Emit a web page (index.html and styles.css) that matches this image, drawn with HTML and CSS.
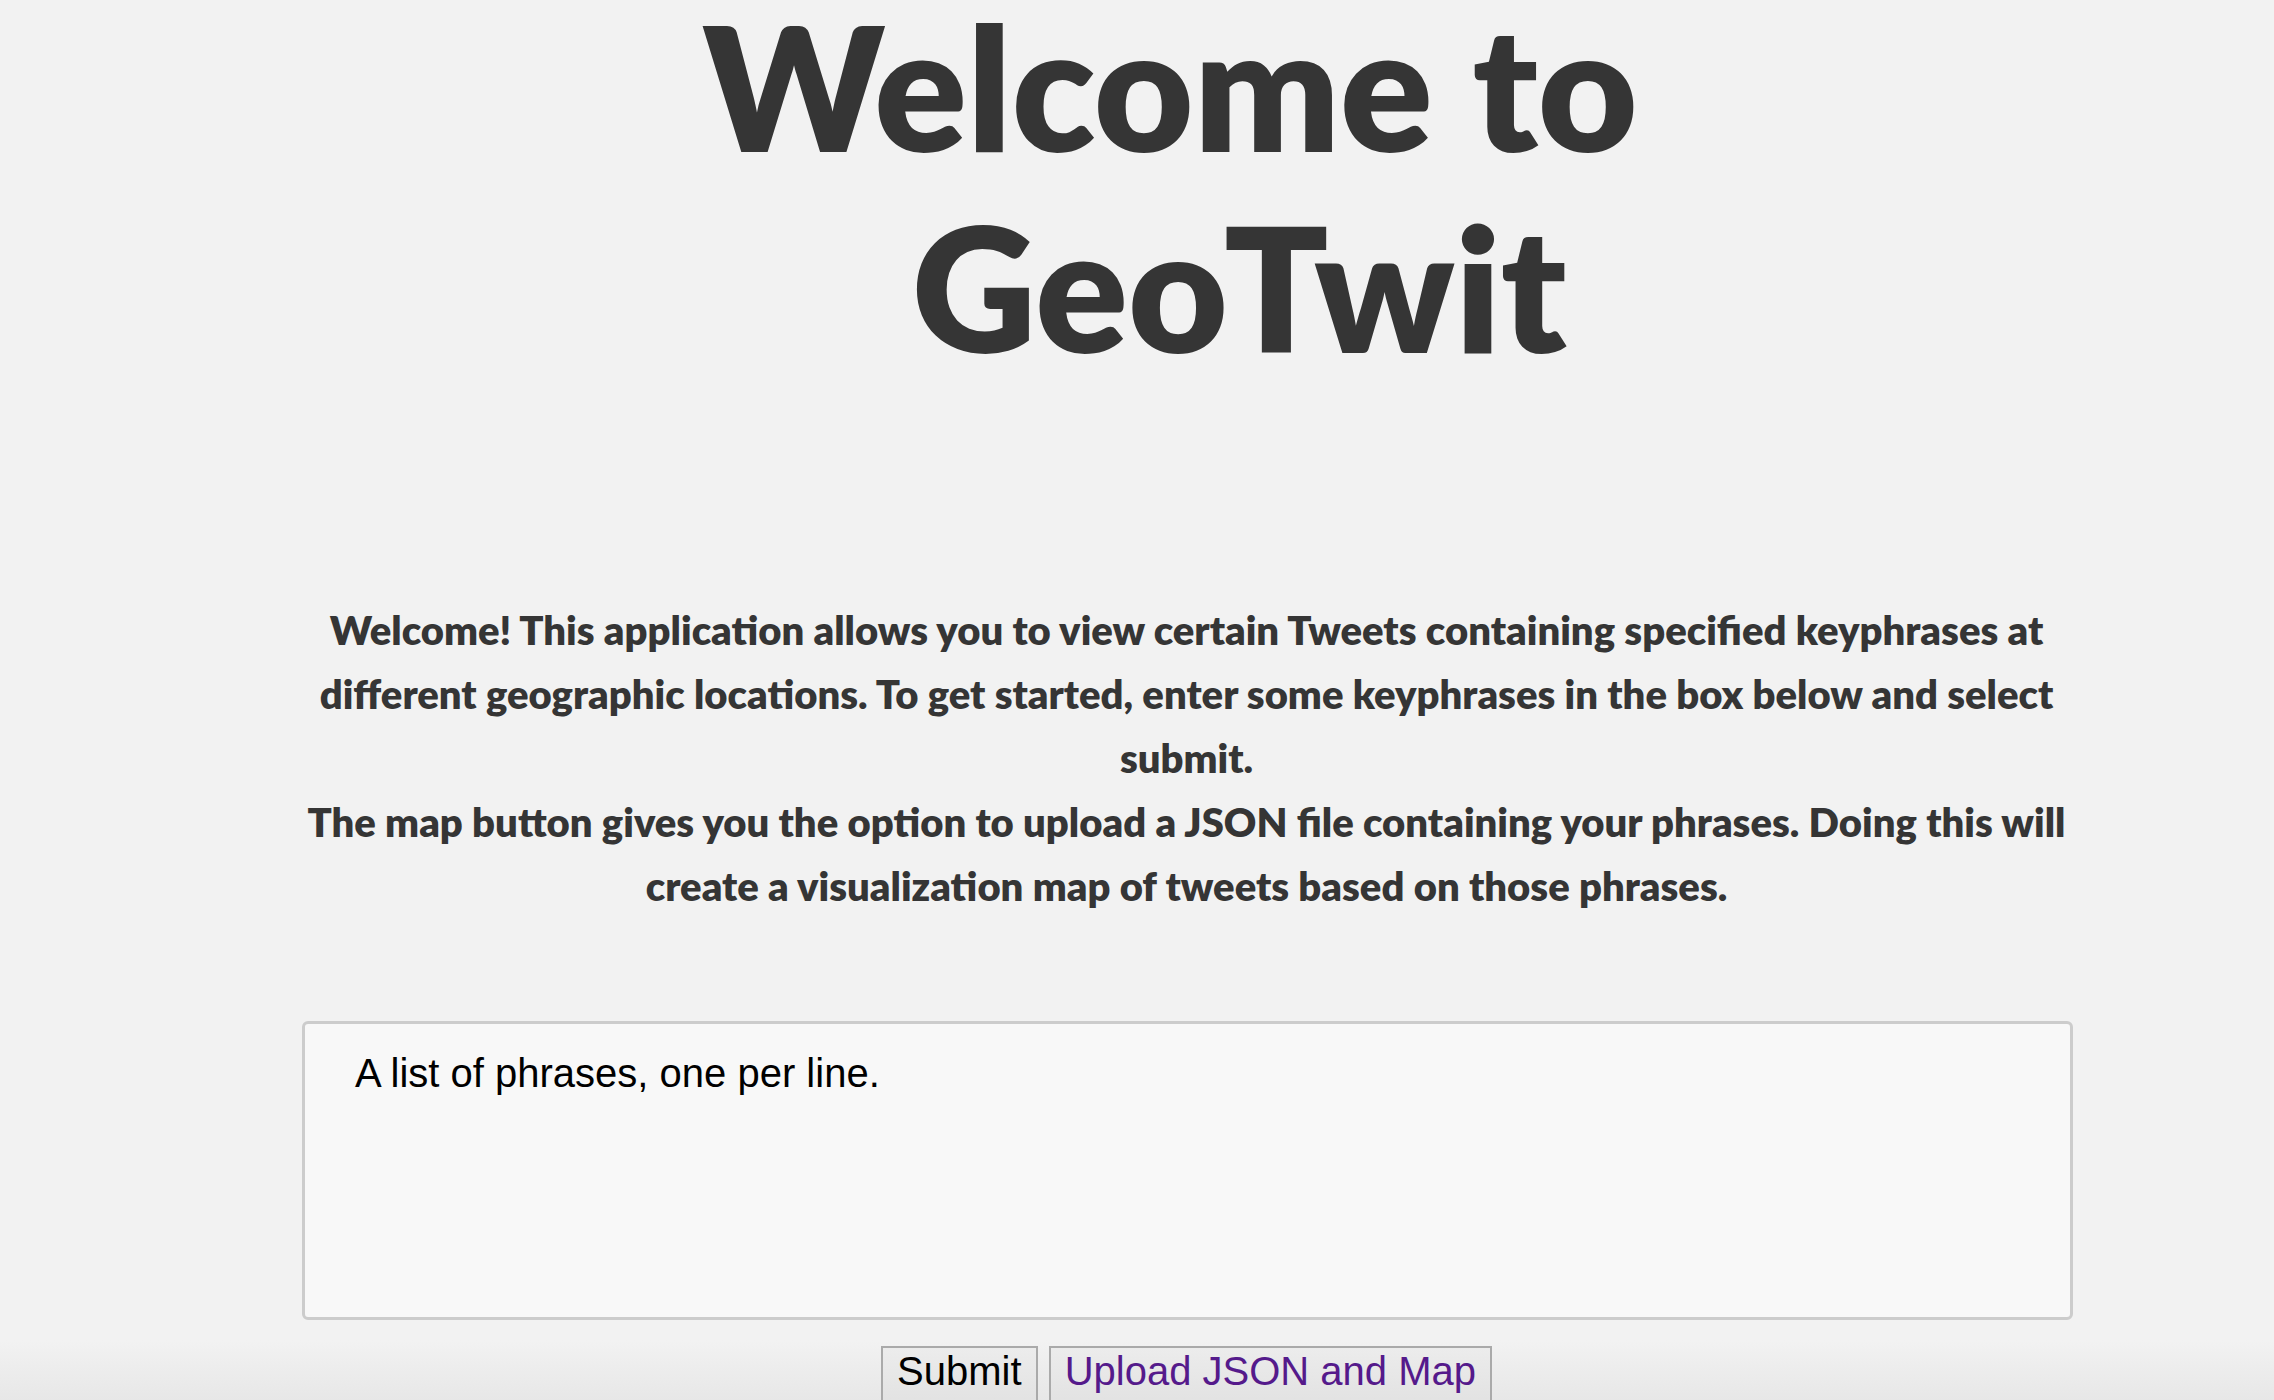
FILE: index.html
```html
<!DOCTYPE html>
<html lang="en">
<head>
<meta charset="utf-8">
<title>GeoTwit</title>
<link rel="stylesheet" href="styles.css">
</head>
<body>
<main class="page">
  <h1 class="title"><span class="title-line first">Welcome to</span><span class="title-line second">Geo<span class="title-twit">Twit</span></span></h1>
  <p class="intro">Welcome! This application allows you to view certain Tweets containing specified keyphrases at different geographic locations. To get started, enter some keyphrases in the box below and select submit.<br>The map button gives you the option to upload a JSON file containing your phrases. Doing this will create a visualization map of tweets based on those phrases.</p>
  <form class="phrase-form">
    <textarea class="phrases" placeholder="A list of phrases, one per line."></textarea>
    <div class="actions">
      <button type="submit" class="btn">Submit</button>
      <a class="btn btn-link" href="#upload">Upload JSON and Map</a>
    </div>
  </form>
</main>
</body>
</html>
```
FILE: styles.css
```css
html, body {
  margin: 0;
  padding: 0;
}
body {
  min-height: 100vh;
  background: linear-gradient(to bottom, #f2f2f2 0, #f2f2f2 calc(100vh - 60px), #e7e7e7 100vh) fixed;
  font-family: Lato, "Liberation Sans", sans-serif;
  color: #353535;
  overflow: hidden;
}
.page {
  width: 1773px;
  margin-left: 300px;
}
.title {
  margin: -15px 0 0;
  font-family: Lato, sans-serif;
  font-weight: 800;
  font-size: 172px;
  line-height: 201px;
  text-align: center;
  color: #353535;
}
.title-line {
  display: block;
}
.title-line.first {
  padding-right: 33px;
}
.title-line.second {
  padding-left: 106px;
}
.title-twit {
  margin-left: -4px;
}
.intro {
  margin: 211px 0 0;
  font-weight: 800;
  font-size: 40px;
  line-height: 64px;
  text-align: center;
}
.phrase-form {
  margin: 103px 0 0;
}
.phrases {
  display: block;
  box-sizing: border-box;
  width: 1771px;
  height: 299px;
  margin: 0 0 0 2px;
  padding: 27px 50px;
  border: 3px solid #cccccc;
  border-radius: 6px;
  background: #f8f8f8;
  font-family: "Liberation Sans", Arial, sans-serif;
  font-size: 40px;
  color: #000;
  resize: none;
  outline: none;
}
.phrases::placeholder {
  color: #000;
  opacity: 1;
}
.actions {
  margin-top: 26px;
  text-align: center;
  font-size: 40px;
  font-family: "Liberation Sans", Arial, sans-serif;
}
.btn {
  display: inline-block;
  box-sizing: border-box;
  margin: 0;
  padding: 0 14px 10px;
  border: 2px solid #aaaaaa;
  background: linear-gradient(to bottom, #ececec, #e2e2e2);
  font-family: "Liberation Sans", Arial, sans-serif;
  font-size: 40px;
  line-height: 46px;
  color: #000;
  text-decoration: none;
  vertical-align: top;
  border-radius: 0;
}
.btn-link {
  color: #551a8b;
}
```
